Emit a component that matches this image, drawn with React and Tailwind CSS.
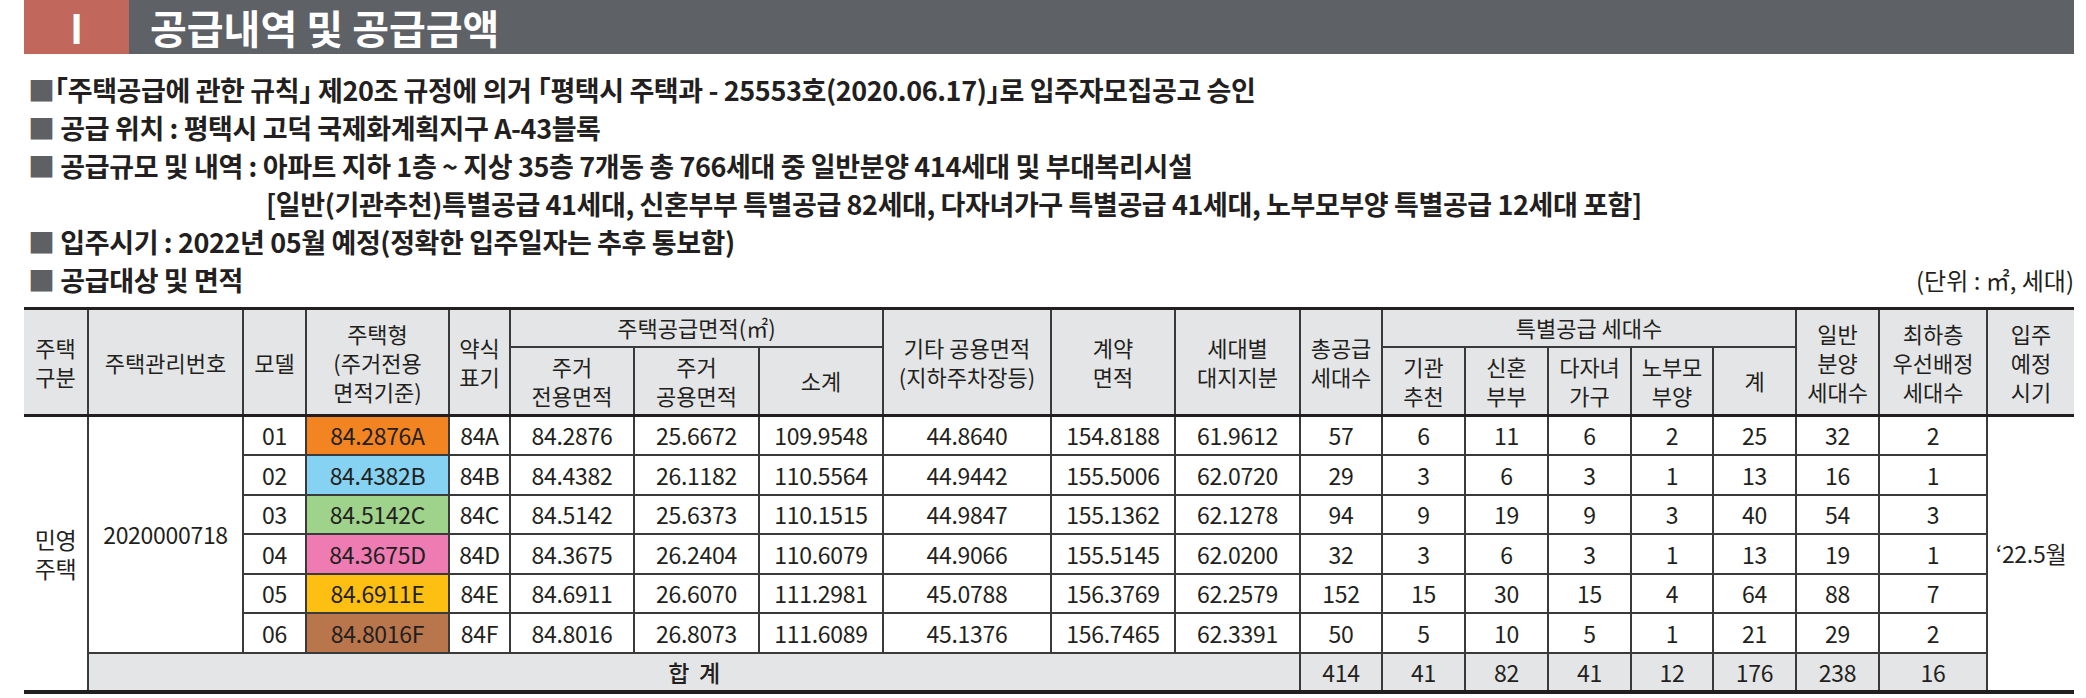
const cols = [64, 155, 63, 143, 61, 124, 125, 124, 168, 124, 125, 82, 83, 83, 83, 82, 83, 83, 108, 87];

const swatch = {
  A: "bg-[#f28422]",
  B: "bg-[#86d2f2]",
  C: "bg-[#9fd28b]",
  D: "bg-[#ee7bb2]",
  E: "bg-[#fdc012]",
  F: "bg-[#b9754b]",
};

const rows = [
  ["01", "84.2876A", "A", "84A", "84.2876", "25.6672", "109.9548", "44.8640", "154.8188", "61.9612", "57", "6", "11", "6", "2", "25", "32", "2"],
  ["02", "84.4382B", "B", "84B", "84.4382", "26.1182", "110.5564", "44.9442", "155.5006", "62.0720", "29", "3", "6", "3", "1", "13", "16", "1"],
  ["03", "84.5142C", "C", "84C", "84.5142", "25.6373", "110.1515", "44.9847", "155.1362", "62.1278", "94", "9", "19", "9", "3", "40", "54", "3"],
  ["04", "84.3675D", "D", "84D", "84.3675", "26.2404", "110.6079", "44.9066", "155.5145", "62.0200", "32", "3", "6", "3", "1", "13", "19", "1"],
  ["05", "84.6911E", "E", "84E", "84.6911", "26.6070", "111.2981", "45.0788", "156.3769", "62.2579", "152", "15", "30", "15", "4", "64", "88", "7"],
  ["06", "84.8016F", "F", "84F", "84.8016", "26.8073", "111.6089", "45.1376", "156.7465", "62.3391", "50", "5", "10", "5", "1", "21", "29", "2"],
];

const totals = ["414", "41", "82", "41", "12", "176", "238", "16"];

const line = "border-[2px] border-[#3a3a3a]";
const th = `${line} bg-[#e4e5e6] font-normal text-[22px] leading-[29px] p-0 align-middle text-center`;
const td = `${line} p-0 align-middle text-center text-[23px] tracking-[-0.3px]`;
const thick = "border-b-[3px] border-b-[#231f20]";

const Bullet = ({ children, className = "" }) => (
  <div className={`h-[38px] flex items-center whitespace-pre ${className}`}>{children}</div>
);

const Sq = () => <span className="text-[#5f6064]">■</span>;

const App = () => {
  return (
    <div className="w-[2086px] h-[698px] overflow-hidden bg-white text-[#231f20] font-['Noto_Sans_CJK_KR','Noto_Sans_CJK_JP',sans-serif]">
      <div className="ml-[24px] w-[2050px]">
        {/* title bar */}
        <div className="flex h-[54px] text-white text-[40px] font-bold leading-none">
          <div className="w-[105px] bg-[#c1675b] flex items-center justify-center">I</div>
          <div className="flex-1 bg-[#5e6165] flex items-center pl-[21px]">공급내역 및 공급금액</div>
        </div>

        {/* bullets */}
        <div className="mt-[17px] pl-[4px] text-[27px] font-bold tracking-[-0.4px]">
          <Bullet>
            <Sq />
            ｢주택공급에 관한 규칙｣ 제20조 규정에 의거 ｢평택시 주택과 - 25553호(2020.06.17)｣로 입주자모집공고 승인
          </Bullet>
          <Bullet>
            <Sq /> 공급 위치 : 평택시 고덕 국제화계획지구 A-43블록
          </Bullet>
          <Bullet>
            <Sq /> 공급규모 및 내역 : 아파트 지하 1층 ~ 지상 35층 7개동 총 766세대 중 일반분양 414세대 및 부대복리시설
          </Bullet>
          <Bullet className="pl-[238px]">
            [일반(기관추천)특별공급 41세대, 신혼부부 특별공급 82세대, 다자녀가구 특별공급 41세대, 노부모부양 특별공급 12세대 포함]
          </Bullet>
          <Bullet>
            <Sq /> 입주시기 : 2022년 05월 예정(정확한 입주일자는 추후 통보함)
          </Bullet>
          <Bullet className="justify-between">
            <span>
              <Sq /> 공급대상 및 면적
            </span>
            <span className="font-normal text-[24px] tracking-normal">(단위 : ㎡, 세대)</span>
          </Bullet>
        </div>

        {/* table */}
        <table className="mt-[8px] table-fixed border-collapse w-[2050px]">
          <colgroup>
            {cols.map((w, i) => (
              <col key={i} style={{ width: w }} />
            ))}
          </colgroup>
          <thead>
            <tr className="h-[38px] [&>th]:border-t-[3px] [&>th]:border-t-[#231f20]">
              <th rowSpan={2} className={`${th} border-l-0 ${thick}`}>
                주택<br />구분
              </th>
              <th rowSpan={2} className={`${th} ${thick}`}>주택관리번호</th>
              <th rowSpan={2} className={`${th} ${thick}`}>모델</th>
              <th rowSpan={2} className={`${th} ${thick}`}>
                주택형<br />(주거전용<br />면적기준)
              </th>
              <th rowSpan={2} className={`${th} ${thick}`}>
                약식<br />표기
              </th>
              <th colSpan={3} className={th}>주택공급면적(㎡)</th>
              <th rowSpan={2} className={`${th} ${thick}`}>
                기타 공용면적<br />(지하주차장등)
              </th>
              <th rowSpan={2} className={`${th} ${thick}`}>
                계약<br />면적
              </th>
              <th rowSpan={2} className={`${th} ${thick}`}>
                세대별<br />대지지분
              </th>
              <th rowSpan={2} className={`${th} ${thick}`}>
                총공급<br />세대수
              </th>
              <th colSpan={5} className={th}>특별공급 세대수</th>
              <th rowSpan={2} className={`${th} ${thick}`}>
                일반<br />분양<br />세대수
              </th>
              <th rowSpan={2} className={`${th} ${thick}`}>
                최하층<br />우선배정<br />세대수
              </th>
              <th rowSpan={2} className={`${th} border-r-0 ${thick}`}>
                입주<br />예정<br />시기
              </th>
            </tr>
            <tr className="h-[69px] [&>th]:border-b-[3px] [&>th]:border-b-[#231f20]">
              <th className={th}>
                주거<br />전용면적
              </th>
              <th className={th}>
                주거<br />공용면적
              </th>
              <th className={th}>소계</th>
              <th className={th}>
                기관<br />추천
              </th>
              <th className={th}>
                신혼<br />부부
              </th>
              <th className={th}>
                다자녀<br />가구
              </th>
              <th className={th}>
                노부모<br />부양
              </th>
              <th className={th}>계</th>
            </tr>
          </thead>
          <tbody>
            {rows.map((r, i) => (
              <tr key={r[0]} className="h-[39.5px]">
                {i === 0 && (
                  <>
                    <td rowSpan={7} className={`${td} border-l-0 border-b-[4px] border-b-[#231f20] text-[22px] leading-[29px]`}>
                      민영<br />주택
                    </td>
                    <td rowSpan={6} className={td}>2020000718</td>
                  </>
                )}
                <td className={td}>{r[0]}</td>
                <td className={`${td} ${swatch[r[2]]}`}>{r[1]}</td>
                {r.slice(3).map((v, j) => (
                  <td key={j} className={td}>
                    {v}
                  </td>
                ))}
                {i === 0 && (
                  <td rowSpan={7} className={`${td} border-r-0 border-b-[4px] border-b-[#231f20]`}>
                    ‘22.5월
                  </td>
                )}
              </tr>
            ))}
            <tr className="h-[39.5px] bg-[#e4e5e6] [&>td]:border-b-[4px] [&>td]:border-b-[#231f20]">
              <td colSpan={10} className={`${td} font-medium`}>
                합&nbsp;&nbsp;계
              </td>
              {totals.map((t, i) => (
                <td key={i} className={td}>
                  {t}
                </td>
              ))}
            </tr>
          </tbody>
        </table>
      </div>
    </div>
  );
};

export default App;
